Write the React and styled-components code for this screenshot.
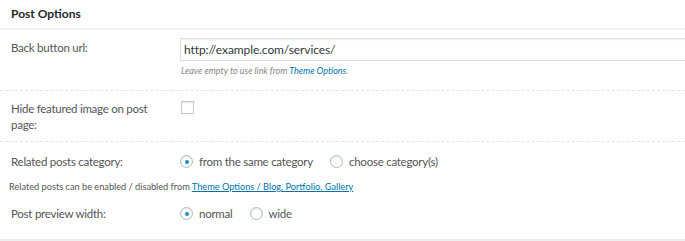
import React from 'react';
import styled, { createGlobalStyle } from 'styled-components';

const GlobalStyle = createGlobalStyle`
  body {
    margin: 0;
    background: #fff;
    font-family: Lato, "Open Sans", sans-serif;
    color: #555;
  }
`;

const PanelUI = styled.div`
  width: 685px;
  height: 241px;
  overflow: hidden;
  background: #fff;
  border-bottom: 2px solid #eee;
  box-sizing: border-box;
`;

const HeaderUI = styled.h2`
  margin: 0;
  height: 30px;
  display: flex;
  align-items: center;
  padding: 0 0 2px 11px;
  font-size: 12px;
  font-weight: 700;
  color: #23282d;
  border-bottom: 2px solid #f3f3f3;
  box-sizing: border-box;
`;

const RowUI = styled.div`
  display: grid;
  grid-template-columns: 180px 1fr;
  align-items: start;
  padding: ${({ pad }) => pad || '10px 0'};
  border-bottom: ${({ last }) => (last ? 'none' : '1px dashed #e5e5e5')};
`;

const LabelUI = styled.label`
  padding-left: 11px;
  padding-right: 24px;
  font-size: 11.5px;
  letter-spacing: -0.25px;
  line-height: ${({ lh }) => lh || '19px'};
  color: #555;
`;

const FieldUI = styled.div`
  display: flex;
  flex-direction: column;
`;

const InputUI = styled.input`
  box-sizing: border-box;
  width: 520px;
  height: 23px;
  margin: 0;
  padding: 0 3px;
  border: 1px solid #ddd;
  box-shadow: inset 0 1px 2px rgba(0, 0, 0, 0.07);
  font-family: inherit;
  font-size: 12px;
  letter-spacing: -0.1px;
  color: #32373c;
  outline: none;
`;

const HintUI = styled.p`
  margin: 4px 0 0 1px;
  font-size: 9px;
  line-height: 12px;
  font-style: italic;
  color: #888;
  a {
    color: #0073aa;
    text-decoration: none;
  }
`;

const CheckboxUI = styled.span`
  display: block;
  margin-left: 1px;
  width: 13px;
  height: 13px;
  border: 1px solid #c8c8c8;
  box-shadow: inset 0 1px 2px rgba(0, 0, 0, 0.08);
  box-sizing: border-box;
`;

const RadioGroupUI = styled.div`
  display: flex;
  align-items: center;
  height: 19px;
`;

const RadioUI = styled.span`
  position: relative;
  flex: none;
  display: inline-block;
  width: 13px;
  height: 13px;
  border-radius: 50%;
  border: 1px solid #b4b9be;
  box-shadow: inset 0 1px 2px rgba(0, 0, 0, 0.1);
  box-sizing: border-box;
  ${({ checked }) => checked && `
    &:after {
      content: "";
      position: absolute;
      left: 3.5px;
      top: 3.5px;
      width: 4px;
      height: 4px;
      border-radius: 50%;
      background: #1e8cbe;
    }
  `}
`;

const RadioTextUI = styled.span`
  margin-left: 6px;
  margin-right: 17px;
  font-size: 11.5px;
  letter-spacing: -0.25px;
  color: #555;
`;

const NoteUI = styled.p`
  margin: 10px 0 0;
  padding-left: 9px;
  font-size: 9.2px;
  line-height: 12px;
  color: #555;
  a {
    color: #0073aa;
  }
`;

const Radio = ({ checked, children }) => (
  <>
    <RadioUI checked={checked} />
    <RadioTextUI>{children}</RadioTextUI>
  </>
);

const App = () => (
  <PanelUI>
    <GlobalStyle />
    <HeaderUI>Post Options</HeaderUI>

    <RowUI pad="8px 0 13px">
      <LabelUI>Back button url:</LabelUI>
      <FieldUI>
        <InputUI defaultValue="http://example.com/services/" />
        <HintUI>
          Leave empty to use link from <a href="#">Theme Options</a>.
        </HintUI>
      </FieldUI>
    </RowUI>

    <RowUI pad="10px 0 8px">
      <LabelUI lh="16px">Hide featured image on post page:</LabelUI>
      <CheckboxUI />
    </RowUI>

    <RowUI pad="10px 0 0" last>
      <LabelUI>Related posts category:</LabelUI>
      <RadioGroupUI>
        <Radio checked>from the same category</Radio>
        <Radio>choose category(s)</Radio>
      </RadioGroupUI>
    </RowUI>

    <NoteUI>
      Related posts can be enabled / disabled from{' '}
      <a href="#">Theme Options / Blog, Portfolio, Gallery</a>
    </NoteUI>

    <RowUI pad="11px 0 0" last>
      <LabelUI>Post preview width:</LabelUI>
      <RadioGroupUI>
        <Radio checked>normal</Radio>
        <Radio>wide</Radio>
      </RadioGroupUI>
    </RowUI>
  </PanelUI>
);

export default App;
